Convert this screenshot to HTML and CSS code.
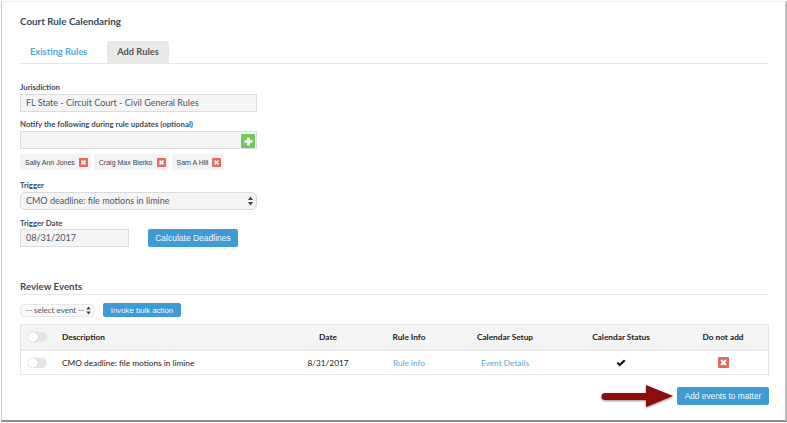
FILE: index.html
```html
<!DOCTYPE html>
<html lang="en">
<head>
<meta charset="utf-8">
<title>Court Rule Calendaring</title>
<link rel="stylesheet" href="styles.css">
</head>
<body>
<main class="card">
  <h1 class="title">Court Rule Calendaring</h1>
  <nav class="tabs">
    <a class="tab">Existing Rules</a>
    <a class="tab tab-active">Add Rules</a>
  </nav>
  <label class="label label-first">Jurisdiction</label>
  <div class="input wide">FL State - Circuit Court - Civil General Rules</div>
  <label class="label label-notify">Notify the following during rule updates (optional)</label>
  <div class="input wide notify">
    <span class="plus"><svg width="9" height="9" viewBox="0 0 9 9"><path d="M3.3 0.5h2.4v2.8h2.8v2.4H5.7v2.8H3.3V5.7H0.5V3.3h2.8z" fill="#fff"/></svg></span>
  </div>
  <div class="chips">
    <span class="chip">Sally Ann Jones <svg class="x" viewBox="0 0 10 10"><use href="#xbox"/></svg></span>
    <span class="chip">Craig Max Bierko <svg class="x" viewBox="0 0 10 10"><use href="#xbox"/></svg></span>
    <span class="chip">Sam A Hill <svg class="x" viewBox="0 0 10 10"><use href="#xbox"/></svg></span>
  </div>
  <label class="label label-trigger">Trigger</label>
  <div class="select wide">CMO deadline: file motions in limine
    <svg class="updown" width="5" height="10" viewBox="0 0 5 10"><path d="M2.5 0.5L5 4H0zM2.5 9.5L0 6h5z" fill="#3a4450"/></svg>
  </div>
  <label class="label label-date">Trigger Date</label>
  <div class="date-row">
    <div class="input date">08/31/2017</div>
    <button class="btn btn-calc">Calculate Deadlines</button>
  </div>
  <h2 class="section">Review Events</h2>
  <div class="bulk">
    <div class="select select-small">-- select event --
      <svg class="updown" width="5" height="9" viewBox="0 0 5 10"><path d="M2.5 0.5L5 4H0zM2.5 9.5L0 6h5z" fill="#3a4450"/></svg>
    </div>
    <button class="btn btn-bulk">Invoke bulk action</button>
  </div>
  <div class="table">
    <div class="row head">
      <span class="toggle"></span>
      <span class="c-desc">Description</span>
      <span class="c-date">Date</span>
      <span class="c-rule">Rule Info</span>
      <span class="c-cal">Calendar Setup</span>
      <span class="c-status">Calendar Status</span>
      <span class="c-dna">Do not add</span>
    </div>
    <div class="row body">
      <span class="toggle"></span>
      <span class="c-desc">CMO deadline: file motions in limine</span>
      <span class="c-date">8/31/2017</span>
      <a class="c-rule link">Rule info</a>
      <a class="c-cal link">Event Details</a>
      <span class="c-status"><svg class="check" width="10" height="8" viewBox="0 0 10 8"><path d="M0.6 4.2L2 2.9 3.7 4.6 8 0.6 9.5 2 3.7 7.4z" fill="#111"/></svg></span>
      <span class="c-dna"><svg class="x x-big" viewBox="0 0 10 10"><use href="#xbox"/></svg></span>
    </div>
  </div>
  <div class="footer">
    <button class="btn btn-add">Add events to matter</button>
    <svg class="arrow" width="74" height="28" viewBox="0 0 74 28">
      <defs><filter id="sh" x="-10%" y="-20%" width="120%" height="150%"><feDropShadow dx="0" dy="1" stdDeviation="1" flood-color="#000" flood-opacity=".45"/></filter></defs>
      <path d="M5 9H46V1L73 12 46 23V16H5a3.500 3.500 0 0 1 0-7z" fill="#8b0b0f" filter="url(#sh)"/>
    </svg>
  </div>
</main>
<svg class="defs" width="0" height="0">
  <symbol id="xbox" viewBox="0 0 10 10">
    <rect width="10" height="10" rx="1.2" fill="#e8685f"/>
    <path d="M2.8 2.8l4.400 4.400M7.200 2.800L2.800 7.200" stroke="#fff" stroke-width="2"/>
  </symbol>
</svg>
</body>
</html>
```
FILE: styles.css
```css
* { box-sizing: border-box; }
html, body { margin: 0; height: 100%; background: #fff; overflow: hidden; }
body { padding: 1px 0 0 1px; font-family: Lato, "Open Sans", sans-serif; color: #3a4450; }
.card {
  position: relative;
  width: 786px;
  height: 421px;
  background: #fff;
  border-left: 1px solid #c9c9c9;
  border-top: 1px solid #ececec;
  border-right: 2px solid #bdbdbd;
  border-bottom: 2px solid #8e8e8e;
  padding: 13px 16px 0 18px;
}
.title { margin: 0; font-size: 9.8px; line-height: 13px; font-weight: 700; color: #34495e; }
.tabs { display: flex; margin-top: 13px; height: 23px; border-bottom: 1px solid #e6e6e6; }
.tab { line-height: 22px; font-size: 9.3px; font-weight: 700; white-space: nowrap; }
.tab:first-child { width: 87px; padding-left: 10px; color: #55a6dc; }
.tab-active { width: 62px; text-align: center; background: #e9e9e9; color: #555; border-radius: 2px 2px 0 0; }
.label { display: block; font-size: 7.8px; line-height: 10px; font-weight: 700; color: #3f4b57; }
.label-first { margin-top: 18px; }
.label-notify { margin-top: 7px; }
.label-trigger { margin-top: 10px; }
.label-date { margin-top: 8px; }
.input {
  background: #f5f5f5;
  border: 1px solid #dcdcdc;
  font-size: 9px;
  color: #4c5866;
  padding-left: 5px;
}
.wide { width: 237px; height: 18px; line-height: 16px; margin-top: 2px; }
.notify { position: relative; }
.plus {
  position: absolute; right: 1px; top: 2px;
  width: 14px; height: 14px;
  background: #70c95a; border-radius: 1px;
  display: flex; align-items: center; justify-content: center;
}
.chips { display: flex; gap: 3px; margin-top: 5px; }
.chip {
  display: flex; align-items: center; gap: 4px;
  height: 16px; padding: 0 3px 0 5px;
  background: #f3f3f3;
  font-family: "Liberation Sans", sans-serif; font-size: 7px; color: #3c444c;
}
.x { width: 9px; height: 9px; display: block; }
.x-big { width: 11px; height: 11px; margin: 0 auto; }
.check { display: block; margin: 0 auto; }
.select {
  position: relative;
  background: #f4f4f4;
  border: 1px solid #dadada;
  border-radius: 5px;
  font-size: 9px;
  color: #4c5866;
  padding-left: 5px;
}
.updown { position: absolute; right: 3px; top: 3px; }
.date-row { display: flex; align-items: flex-start; gap: 19px; margin-top: 1px; }
.date { width: 109px; height: 18px; line-height: 16px; }
.btn {
  display: block; border: 0; padding: 0;
  background: #3f9bd4; color: #f2f8fc;
  border-radius: 2px;
  font-family: "Liberation Sans", sans-serif; text-align: center;
}
.btn-calc { width: 90px; height: 18px; font-size: 8.5px; }
.section {
  margin: 33px 0 0; height: 15px;
  font-size: 9.7px; line-height: 12px; font-weight: 700; color: #3f4b57;
  border-bottom: 1px solid #e6e6e6;
}
.bulk { display: flex; align-items: center; gap: 8px; margin-top: 8px; }
.select-small { width: 75px; height: 13px; line-height: 11px; font-size: 8px; padding-left: 5px; border-radius: 4px; background: #f8f8f8; border-color: #e8e8e8; }
.select-small .updown { top: 1px; }
.btn-bulk { width: 78px; height: 14px; font-size: 7.8px; }
.table { margin-top: 7px; border: 1px solid #e6e6e6; }
.row {
  display: grid;
  grid-template-columns: 41px 231px 70px 92px 100px 132px 72px;
  align-items: center;
  font-size: 8.3px;
  color: #222;
}
.row > :not(.toggle):not(.c-desc) { text-align: center; }
.toggle {
  width: 19px; height: 10px; margin-left: 7px;
  background: #e4e4e4; border-radius: 5px; position: relative;
}
.toggle::before {
  content: ""; position: absolute; left: 0; top: 0;
  width: 10px; height: 10px; border-radius: 50%;
  background: #fff; box-shadow: 0 0 1px #999;
}
.head { height: 26px; background: #f4f4f4; font-weight: 700; border-bottom: 2px solid #e9e9e9; }
.body { height: 23px; }
.link { color: #55a6dc; }
.footer { position: relative; display: flex; justify-content: flex-end; margin-top: 12px; }
.btn-add { width: 92px; height: 18px; font-size: 8.3px; }
.arrow { position: absolute; right: 95px; top: -3px; }
.defs { position: absolute; }
```
